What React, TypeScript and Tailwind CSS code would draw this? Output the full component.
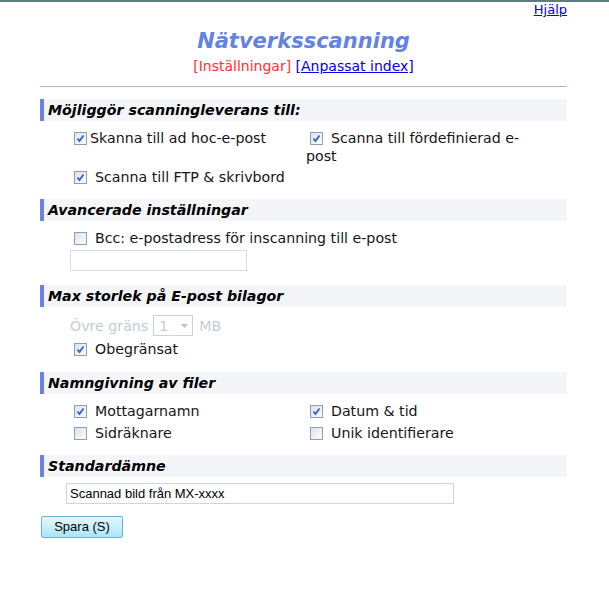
import React from "react";

const verdana = "font-['Verdana','DejaVu_Sans',sans-serif]";

function Box({ checked }: { checked: boolean }) {
  return (
    <span className="inline-flex h-[13px] w-[13px] shrink-0 items-center justify-center border border-[#8e9fb5] bg-gradient-to-br from-[#dde3ea] to-[#fbfcfd]">
      {checked ? (
        <svg viewBox="0 0 11 11" className="h-[11px] w-[11px]">
          <path d="M2.5 5.5 L4.5 8 L8.5 2.5" fill="none" stroke="#2f5fd0" strokeWidth="1.8" />
        </svg>
      ) : null}
    </span>
  );
}

function Check({ checked, label, gap = "gap-2" }: { checked: boolean; label: string; gap?: string }) {
  return (
    <label className={`flex h-[18px] items-center ${gap}`}>
      <Box checked={checked} />
      <span>{label}</span>
    </label>
  );
}

function Heading({ children }: { children: React.ReactNode }) {
  return (
    <div className="flex h-[22px] items-center border-l-4 border-[#6b82e3] bg-[#f3f5f9] pl-1 text-[14.2px] font-bold italic leading-none text-black">
      {children}
    </div>
  );
}

export default function App() {
  return (
    <div className={`min-h-[603px] w-[609px] border-t-2 border-[#5e7c7e] bg-white text-[14.2px] leading-[18px] text-[#151515] ${verdana}`}>
      <div className="ml-[40px] w-[527px]">
        <div className="flex justify-end">
          <a href="#" className="text-[13px] leading-[16px] text-[#0000ee] underline">Hjälp</a>
        </div>
        <h1 className="mt-[9px] text-center text-[21px] font-bold italic leading-[28px] text-[#6282e4]">Nätverksscanning</h1>
        <div className="mt-[2px] text-center text-[14px] leading-[18px]">
          <span className="text-[#ff3030]">[Inställningar]</span>{" "}
          <a href="#" className="text-[#0000ee] underline">[Anpassat index]</a>
        </div>
        <div className="mt-[11px] h-[2px] border-t border-[#a8b6c9] bg-white" />

        <div className="mt-[11px]">
          <Heading>Möjliggör scanningleverans till:</Heading>
          <div className="mt-[8px] grid grid-cols-[232px_1fr] items-start pl-[34px]">
            <Check checked label="Skanna till ad hoc-e-post" gap="gap-[3px]" />
            <div className="w-[215px] leading-[18px]">
              <span className="inline-flex items-center pl-[4px] align-[-1px]"><Box checked /></span>
              <span className="ml-[8px]">Scanna till fördefinierad e-post</span>
            </div>
          </div>
          <div className="mt-[3px] pl-[34px]">
            <Check checked label="Scanna till FTP & skrivbord" />
          </div>
        </div>

        <div className="mt-[13px]">
          <Heading>Avancerade inställningar</Heading>
          <div className="mt-[8px] pl-[34px]">
            <Check checked={false} label="Bcc: e-postadress för inscanning till e-post" />
          </div>
          <div className="mt-[3px] ml-[30px] h-[21px] w-[177px] border border-[#d5dde6] bg-white" />
        </div>

        <div className="mt-[14px]">
          <Heading>Max storlek på E-post bilagor</Heading>
          <div className="mt-[8px] flex items-center pl-[30px] text-[#c4ccd6]">
            <span>Övre gräns</span>
            <span className="ml-[5px] flex h-[21px] w-[40px] items-center justify-between border border-[#c9d2dc] pl-[5px] pr-[4px]">
              <span>1</span>
              <svg viewBox="0 0 7 4" className="h-[4px] w-[7px]"><path d="M0 0 L7 0 L3.5 4 Z" fill="#b8c2cd" /></svg>
            </span>
            <span className="ml-[6px]">MB</span>
          </div>
          <div className="mt-[4px] pl-[34px]">
            <Check checked label="Obegränsat" />
          </div>
        </div>

        <div className="mt-[14px]">
          <Heading>Namngivning av filer</Heading>
          <div className="mt-[8px] grid grid-cols-[236px_1fr] gap-y-[4px] pl-[34px]">
            <Check checked label="Mottagarnamn" />
            <Check checked label="Datum & tid" />
            <Check checked={false} label="Sidräknare" />
            <Check checked={false} label="Unik identifierare" />
          </div>
        </div>

        <div className="mt-[13px]">
          <Heading>Standardämne</Heading>
          <div className="mt-[6px] ml-[26px] flex h-[21px] w-[388px] items-center border border-[#cdd6e0] bg-white px-[3px] font-['Liberation_Sans',Arial,sans-serif] text-[13px] text-black">
            Scannad bild från MX-xxxx
          </div>
          <button className="mt-[12px] ml-px h-[22px] w-[82px] rounded-[2px] border border-[#6fb0d8] bg-gradient-to-b from-[#e4f8fd] via-[#c9f0fb] to-[#a8e4f6] font-['Liberation_Sans',Arial,sans-serif] text-[13px] text-black">
            Spara (S)
          </button>
        </div>
      </div>
    </div>
  );
}
